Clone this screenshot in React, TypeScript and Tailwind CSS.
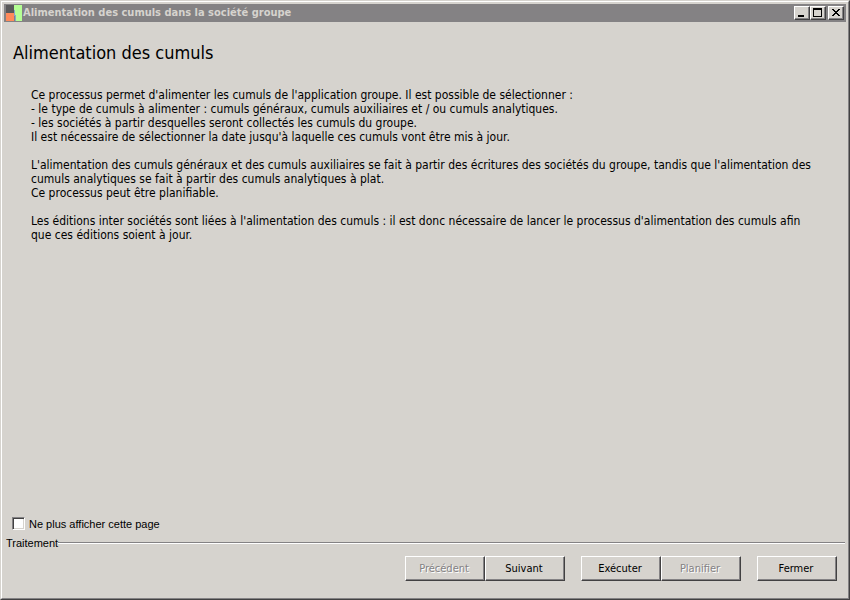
import React, { useState } from "react";
import clsx from "clsx";

const paragraphs = [
  [
    "Ce processus permet d'alimenter les cumuls de l'application groupe. Il est possible de sélectionner :",
    "- le type de cumuls à alimenter : cumuls généraux, cumuls auxiliaires et / ou cumuls analytiques.",
    "- les sociétés à partir desquelles seront collectés les cumuls du groupe.",
    "Il est nécessaire de sélectionner la date jusqu'à laquelle ces cumuls vont être mis à jour.",
  ],
  [
    "L'alimentation des cumuls généraux et des cumuls auxiliaires se fait à partir des écritures des sociétés du groupe, tandis que l'alimentation des",
    "cumuls analytiques se fait à partir des cumuls analytiques à plat.",
    "Ce processus peut être planifiable.",
  ],
  [
    "Les éditions inter sociétés sont liées à l'alimentation des cumuls : il est donc nécessaire de lancer le processus d'alimentation des cumuls afin",
    "que ces éditions soient à jour.",
  ],
];

const raised =
  "bg-[#d6d3ce] border border-t-white border-l-white border-r-[#424142] border-b-[#424142] shadow-[inset_-1px_-1px_0_#848284]";

const ActionButton = ({
  label,
  disabled = false,
}: {
  label: string;
  disabled?: boolean;
}) => (
  <button
    type="button"
    disabled={disabled}
    className={clsx(
      raised,
      "h-[25px] w-20 pr-[2px] text-center leading-[22px]",
      disabled && "text-[#848284] [text-shadow:1px_1px_0_#fff]"
    )}
  >
    {label}
  </button>
);

const TitleButton = ({
  label,
  children,
}: {
  label: string;
  children: React.ReactNode;
}) => (
  <button
    type="button"
    aria-label={label}
    className={clsx(raised, "flex h-[14px] w-4 items-center justify-center")}
  >
    <svg
      width="12"
      height="10"
      viewBox="0 0 12 10"
      shapeRendering="crispEdges"
      className="shrink-0"
    >
      {children}
    </svg>
  </button>
);

const TitleBar = () => (
  <header className="flex h-[18px] items-center bg-[#848284] px-[2px]">
    <svg
      width="16"
      height="16"
      viewBox="0 0 16 16"
      shapeRendering="crispEdges"
      className="shrink-0"
    >
      <rect width="8" height="8" fill="#5a595a" />
      <rect y="8" width="8" height="8" fill="#ff8a5a" />
      <path d="M8 0h8v16h-6v-6h-1v-5h-1z" fill="#b5ff94" />
      <path d="M8 5h1v5h1v6h-1v-5h-1z" fill="#84a6c6" />
    </svg>
    <h1 className="grow pl-px text-[11px] font-bold whitespace-nowrap text-[#d6d3ce]">
      Alimentation des cumuls dans la société groupe
    </h1>
    <TitleButton label="Réduire">
      <rect x="2" y="7" width="6" height="2" />
    </TitleButton>
    <TitleButton label="Agrandir">
      <path d="M1 0h9v9h-9z M2 2v6h7v-6z" fillRule="evenodd" />
    </TitleButton>
    <span className="w-[2px]" />
    <TitleButton label="Fermer la fenêtre">
      <path d="M2 1h2v1h1v1h2v-1h1v-1h2v1h-1v1h-1v1h-1v1h1v1h1v1h1v1h-2v-1h-1v-1h-2v1h-1v1h-2v-1h1v-1h1v-1h1v-1h-1v-1h-1v-1h-1z" />
    </TitleButton>
  </header>
);

export default function App() {
  const [hidePage, setHidePage] = useState(false);

  return (
    <div className="flex min-h-screen flex-col border border-t-[#d6d3ce] border-r-[#424142] border-b-[#424142] border-l-[#d6d3ce] bg-[#d6d3ce] font-['DejaVu_Sans_Condensed','Noto_Sans',sans-serif] text-[11px] leading-[14px] text-black">
      <div className="flex grow flex-col border border-t-white border-r-[#848284] border-b-[#848284] border-l-white p-[2px]">
        <TitleBar />

        <main className="grow px-[9px] pt-5">
          <h2 className="text-[18px] leading-[22px]">Alimentation des cumuls</h2>
          <div className="flex flex-col gap-[14px] pt-6 pl-[18px] text-[12px] leading-[14px] whitespace-nowrap">
            {paragraphs.map((lines, i) => (
              <p key={i}>
                {lines.map((line) => (
                  <span key={line} className="block">
                    {line}
                  </span>
                ))}
              </p>
            ))}
          </div>
        </main>

        <label className="flex items-start gap-1 self-start pl-2 font-['Liberation_Sans',sans-serif]">
          <input
            type="checkbox"
            checked={hidePage}
            onChange={(e) => setHidePage(e.target.checked)}
            className="size-[13px] appearance-none border border-t-[#848284] border-r-white border-b-white border-l-[#848284] bg-white shadow-[inset_1px_1px_0_#424142,inset_-1px_-1px_0_#d6d3ce] checked:bg-[#424142]"
          />
          Ne plus afficher cette page
        </label>

        <div role="group" aria-labelledby="traitement" className="pt-[5px]">
          <div className="flex items-center pr-px pl-[2px]">
            <span id="traitement" className="font-['Liberation_Sans',sans-serif]">
              Traitement
            </span>
            <span className="h-[2px] grow border-t border-b border-t-[#848284] border-b-white" />
          </div>
          <div className="flex justify-end gap-4 pt-[6px] pr-[9px] pb-[15px]">
            <div className="flex">
              <ActionButton label="Précédent" disabled />
              <ActionButton label="Suivant" />
            </div>
            <div className="flex">
              <ActionButton label="Exécuter" />
              <ActionButton label="Planifier" disabled />
            </div>
            <ActionButton label="Fermer" />
          </div>
        </div>
      </div>
    </div>
  );
}
